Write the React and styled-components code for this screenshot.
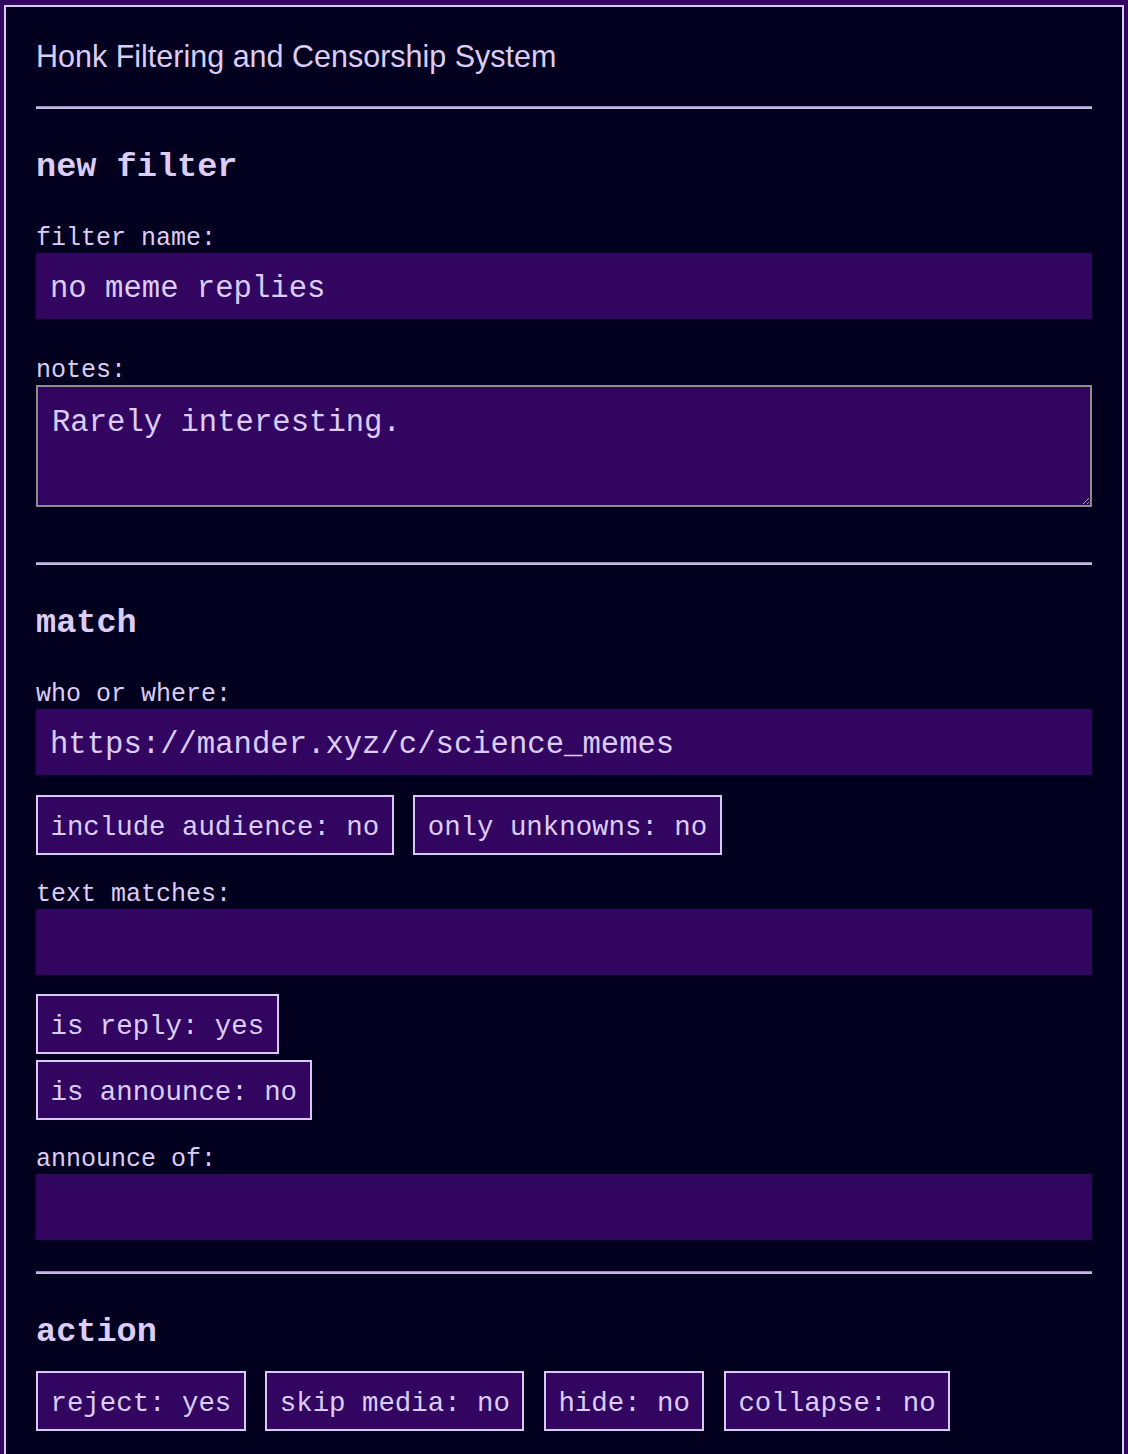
import styled, { createGlobalStyle } from "styled-components";

const GlobalStyle = createGlobalStyle`
  html, body {
    margin: 0;
    padding: 0;
    background: #32065f;
  }
  body {
    color: #dccdf7;
    font-family: "Liberation Mono", "Courier New", monospace;
  }
`;

const Panel = styled.div`
  margin: 5px 4px 0;
  border: 2px solid #d8c8f4;
  border-bottom: none;
  background: #02001e;
  padding: 32px 30px 30px 30px;
  min-height: 1420px;
  box-sizing: border-box;
`;

const Title = styled.div`
  font-family: "Liberation Sans", Arial, sans-serif;
  font-size: 30.5px;
  line-height: 35px;
  color: #dccdf7;
`;

const Rule = styled.div`
  margin-top: ${(props) => props.$space || 32}px;
  height: 1px;
  border-top: 1px solid #9a8cba;
  border-bottom: 1px solid #cdbde9;
  background: #c2b2e0;
`;

const Heading = styled.h2`
  margin: 37px 0 0;
  padding-top: 2px;
  font-family: "Liberation Mono", "Courier New", monospace;
  font-size: 33.6px;
  font-weight: bold;
  line-height: 38px;
  color: #dccdf7;
`;

const Label = styled.label`
  display: block;
  margin-top: ${(props) => props.$space}px;
  padding-top: 2px;
  font-size: 25px;
  line-height: 28px;
  color: #dccdf7;
`;

const TextInput = styled.input`
  display: block;
  width: 100%;
  height: 66px;
  box-sizing: border-box;
  margin: 0;
  padding: 6px 14px 0;
  border: none;
  outline: none;
  background: #320561;
  color: #dccdf7;
  font-family: "Liberation Mono", "Courier New", monospace;
  font-size: 30.6px;
`;

const Notes = styled.textarea`
  display: block;
  width: 100%;
  height: 122px;
  box-sizing: border-box;
  margin: 0;
  padding: 19px 14px 15px;
  border: 2px solid #8c8c8c;
  outline: none;
  background: #320561;
  color: #dccdf7;
  font-family: "Liberation Mono", "Courier New", monospace;
  font-size: 30.6px;
  resize: vertical;
`;

const ButtonRow = styled.div`
  display: flex;
  flex-wrap: wrap;
  gap: 19.5px;
  margin-top: ${(props) => props.$space}px;
`;

const Toggle = styled.button`
  height: 60px;
  box-sizing: border-box;
  margin: 0;
  padding: 4px 12.5px 0;
  border: 2px solid #d8c8f4;
  background: #320561;
  color: #dccdf7;
  font-family: "Liberation Mono", "Courier New", monospace;
  font-size: 27.4px;
  white-space: pre;
  cursor: pointer;
`;

const App = () => {
  return (
    <>
      <GlobalStyle />
      <Panel>
        <Title>Honk Filtering and Censorship System</Title>
        <Rule $space={32} />

        <Heading>new filter</Heading>
        <Label $space={37}>filter name:</Label>
        <TextInput defaultValue="no meme replies" />
        <Label $space={36}>notes:</Label>
        <Notes defaultValue="Rarely interesting." />
        <Rule $space={55} />

        <Heading>match</Heading>
        <Label $space={37}>who or where:</Label>
        <TextInput defaultValue="https://mander.xyz/c/science_memes" />
        <ButtonRow $space={20}>
          <Toggle>include audience: no</Toggle>
          <Toggle>only unknowns: no</Toggle>
        </ButtonRow>
        <Label $space={24}>text matches:</Label>
        <TextInput defaultValue="" />
        <ButtonRow $space={19}>
          <Toggle>is reply: yes</Toggle>
        </ButtonRow>
        <ButtonRow $space={6}>
          <Toggle>is announce: no</Toggle>
        </ButtonRow>
        <Label $space={24}>announce of:</Label>
        <TextInput defaultValue="" />
        <Rule $space={31} />

        <Heading>action</Heading>
        <ButtonRow $space={20}>
          <Toggle>reject: yes</Toggle>
          <Toggle>skip media: no</Toggle>
          <Toggle>hide: no</Toggle>
          <Toggle>collapse: no</Toggle>
        </ButtonRow>
      </Panel>
    </>
  );
};

export default App;
